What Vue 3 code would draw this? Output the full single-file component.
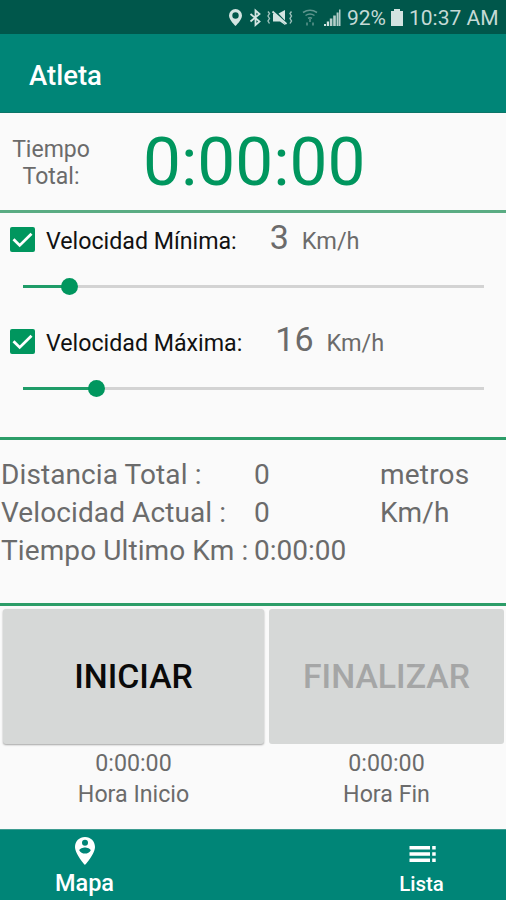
<template>
  <div class="screen">
    <header class="status-bar">
      <svg class="status-icons" viewBox="0 0 122 34" width="122" height="34">
        <path
          fill-rule="evenodd"
          d="M15.500 9a6.500 6.500 0 0 0-6.500 6.500C9 20 15.500 26 15.500 26S22 20 22 15.500A6.500 6.500 0 0 0 15.500 9zm0 3.300a3.200 3.200 0 1 1 0 6.400 3.200 3.200 0 0 1 0-6.400z"
        />
        <path class="line" d="M30.500 14l9 7.500-4 3.500V10.500l4 3.500-9 7.500" />
        <g class="thin">
          <path d="M48 11.500l1.500 2-1.500 2.500 1.500 2.500-1.500 2.500 1.500 2.500M71.500 11.500l-1.500 2 1.500 2.500-1.500 2.500 1.500 2.500-1.500 2.500" />
        </g>
        <path d="M53 14h3l9 10v1l-5-3.500h-7zM58.500 13.500l6.500-3.500v10.500z" />
        <path class="line" d="M52.500 11.500l14 12.500" />
        <g class="faint">
          <path d="M83 12.500q7-4.500 14 0M85.500 15.500q4.500-3 9 0M88 18.300q2-1.300 4 0" />
          <path d="M90 19v3M87 25.500v-3M93 25.500v-3" />
        </g>
        <path d="M104 24h2v2h-2zM106.800 21.500h2.200V26h-2.200z" />
        <path opacity=".85" d="M109.800 18.500h2.600V26h-2.600zM113.200 15.500h2.600V26h-2.600zM116.600 12.500h2V26h-2zM119 9.500h1.500V26H119z" />
      </svg>
      <span class="battery-level">92%</span>
      <svg class="battery" viewBox="0 0 12 17" width="12" height="17">
        <path d="M0 2h3V0h6v2h3v15H0z" />
      </svg>
      <span class="clock">10:37 AM</span>
    </header>

    <div class="app-bar">
      <h1>Atleta</h1>
    </div>

    <main>
      <section class="total">
        <div class="total-label">Tiempo<br />Total:</div>
        <div class="stopwatch">{{ totalTime }}</div>
      </section>

      <section class="limits">
        <div v-for="limit in limits" :key="limit.id" class="limit">
          <div class="limit-row">
            <button class="checkbox" @click="limit.enabled = !limit.enabled">
              <svg viewBox="0 0 25 25" width="25" height="25">
                <rect width="25" height="25" rx="2" />
                <path v-if="limit.enabled" d="M3.500 12.200l6.200 6.200L21.500 6.800" />
              </svg>
            </button>
            <span class="limit-name">{{ limit.name }}</span>
            <span class="limit-value">{{ limit.value }}</span>
            <span class="limit-unit">Km/h</span>
          </div>
          <div class="slider">
            <div class="slider-fill" :style="{ width: limit.progress + '%' }"></div>
            <div class="slider-thumb"></div>
          </div>
        </div>
      </section>

      <section class="stats">
        <div v-for="stat in stats" :key="stat.name" class="stat">
          <span class="stat-name">{{ stat.name }}</span>
          <span class="stat-value">{{ stat.value }}</span>
          <span class="stat-unit">{{ stat.unit }}</span>
        </div>
      </section>

      <section class="actions">
        <div class="action start">
          <button class="btn">INICIAR</button>
          <span class="time">0:00:00</span>
          <span class="caption">Hora Inicio</span>
        </div>
        <div class="action finish">
          <button class="btn" disabled>FINALIZAR</button>
          <span class="time">0:00:00</span>
          <span class="caption">Hora Fin</span>
        </div>
      </section>
    </main>

    <nav class="bottom-nav">
      <a class="nav-item map">
        <svg viewBox="0 0 22 30" width="22" height="30">
          <path
            fill-rule="evenodd"
            d="M11 1C5.300 1 1 5.300 1 11c0 7 10 18 10 18s10-11 10-18C21 5.300 16.700 1 11 1zm0 2.800a3 3 0 1 1 0 6 3 3 0 0 1 0-6zM11 17.500c-2.500 0-4.600-1.200-5.700-3.100 0-1.900 3.800-2.900 5.700-2.900s5.700 1 5.700 2.900c-1.100 1.900-3.200 3.100-5.700 3.100z"
          />
        </svg>
        <span>Mapa</span>
      </a>
      <a class="nav-item list">
        <svg viewBox="0 0 28 16" width="28" height="16">
          <path d="M1.500 0h20.500v3.500H1.500zM1.500 6.200h20.500v3.500H1.500zM1.500 12.500h20.500V16H1.500zM24.200 0h3.500v3.500h-3.500zM24.200 6.200h3.500v3.500h-3.500zM24.200 12.500h3.500V16h-3.500z" />
        </svg>
        <span>Lista</span>
      </a>
    </nav>
  </div>
</template>

<script setup>
import { ref } from 'vue'

const totalTime = ref('0:00:00')

const limits = ref([
  { id: 'min', name: 'Velocidad Mínima:', value: 3, progress: 10, enabled: true },
  { id: 'max', name: 'Velocidad Máxima:', value: 16, progress: 15.8, enabled: true },
])

const stats = ref([
  { name: 'Distancia Total :', value: '0', unit: 'metros' },
  { name: 'Velocidad Actual :', value: '0', unit: 'Km/h' },
  { name: 'Tiempo Ultimo Km :', value: '0:00:00', unit: '' },
])
</script>

<style>
body {
  margin: 0;
  background: #fafafa;
}
</style>

<style scoped>
.screen {
  display: flex;
  flex-direction: column;
  width: 506px;
  height: 900px;
  overflow: hidden;
  background: #fafafa;
  color: #6b6b6b;
  font-family: Roboto, 'Liberation Sans', sans-serif;
  white-space: nowrap;
}

.status-bar {
  display: flex;
  align-items: center;
  box-sizing: border-box;
  height: 34px;
  padding-left: 220px;
  background: #00574b;
  color: #c5dad6;
  font-size: 21px;
  line-height: 34px;
}

.status-bar svg {
  fill: #d3e4e1;
  flex: none;
}

.status-icons .line,
.status-icons .thin,
.status-icons .faint {
  fill: none;
  stroke: #d3e4e1;
  stroke-width: 1.8;
}

.status-icons .thin {
  stroke-width: 1.4;
  opacity: 0.75;
}

.status-icons .faint {
  stroke-width: 1.5;
  opacity: 0.45;
}

.battery-level {
  width: 43px;
  margin-left: 5px;
  padding-top: 2px;
}

.battery {
  margin-left: 1px;
}

.clock {
  margin-left: 6px;
  padding-top: 2px;
}

.app-bar {
  display: flex;
  align-items: center;
  box-sizing: border-box;
  height: 79px;
  padding: 5px 0 0 29px;
  background: #008577;
  border-bottom: 1px solid #0b7568;
}

.app-bar h1 {
  margin: 0;
  color: #ffffff;
  font-size: 27.5px;
  font-weight: 500;
}

.total {
  display: flex;
  box-sizing: border-box;
  height: 100px;
  border-bottom: 3px solid #5aac83;
}

.total-label {
  width: 102px;
  padding-top: 23px;
  font-size: 23px;
  line-height: 27px;
  text-align: center;
}

.stopwatch {
  margin-left: 41px;
  padding-top: 9px;
  color: #00965e;
  font-size: 67.5px;
  line-height: 80px;
}

.limits {
  box-sizing: border-box;
  height: 227px;
  border-bottom: 3px solid #2c9d68;
}

.limit {
  height: 102px;
}

.limit-row {
  display: flex;
  align-items: baseline;
  height: 54px;
  padding-left: 10px;
}

.checkbox {
  align-self: flex-start;
  width: 25px;
  height: 25px;
  margin: 14px 11px 0 0;
  padding: 0;
  border: none;
  background: none;
}

.checkbox svg {
  display: block;
}

.checkbox rect {
  fill: #00965e;
}

.checkbox path {
  fill: none;
  stroke: #ffffff;
  stroke-width: 2.8;
}

.limit-name {
  color: #111111;
  font-size: 23.2px;
}

.limit-value {
  margin-left: 33px;
  font-size: 34px;
  line-height: 48px;
}

.limit-unit {
  margin-left: 13px;
  font-size: 23.5px;
}

.slider {
  display: flex;
  align-items: center;
  width: 461px;
  height: 3px;
  margin: 18px 0 0 23px;
  background: #d3d3d3;
}

.slider-fill {
  height: 3px;
  background: #1f9c68;
}

.slider-thumb {
  flex: none;
  width: 17px;
  height: 17px;
  margin-left: -8px;
  border-radius: 50%;
  background: #00965e;
}

.stats {
  box-sizing: border-box;
  height: 166px;
  padding: 16px 0 0 1px;
  border-bottom: 3px solid #2c9d68;
  font-size: 28px;
  line-height: 38px;
}

.stat {
  display: grid;
  grid-template-columns: 253px 126px 1fr;
}

.stat-name {
  letter-spacing: 0.1px;
}

.stat-unit {
  letter-spacing: 0.2px;
}

.actions {
  display: flex;
  height: 223px;
}

.action {
  display: flex;
  flex-direction: column;
  align-items: center;
  padding-top: 3px;
  font-size: 23.2px;
}

.start {
  width: 267px;
}

.finish {
  width: 239px;
}

.btn {
  box-sizing: border-box;
  width: 261px;
  height: 135px;
  padding: 0;
  border: none;
  border-radius: 3px;
  background: #d6d8d7;
  box-shadow: 0 1px 2px rgba(0, 0, 0, 0.35);
  color: #0a0a0a;
  font-family: inherit;
  font-size: 33.8px;
  font-weight: 500;
}

.btn:disabled {
  width: 235px;
  box-shadow: none;
  color: #a5a6a6;
}

.time {
  margin-top: 4px;
  line-height: 31px;
}

.caption {
  line-height: 31px;
}

.bottom-nav {
  display: flex;
  justify-content: space-between;
  box-sizing: border-box;
  height: 71px;
  border-top: 1px solid #3d9c91;
  background: #008577;
  color: #ffffff;
}

.nav-item {
  display: flex;
  flex-direction: column;
  align-items: center;
  width: 169px;
  font-weight: 500;
}

.nav-item svg {
  fill: #ffffff;
}

.map svg {
  margin-top: 6px;
}

.map span {
  margin-top: 1px;
  font-size: 23.5px;
  line-height: 32px;
}

.list svg {
  margin-top: 16px;
}

.list span {
  margin-top: 7px;
  font-size: 20.5px;
  line-height: 30px;
}
</style>
